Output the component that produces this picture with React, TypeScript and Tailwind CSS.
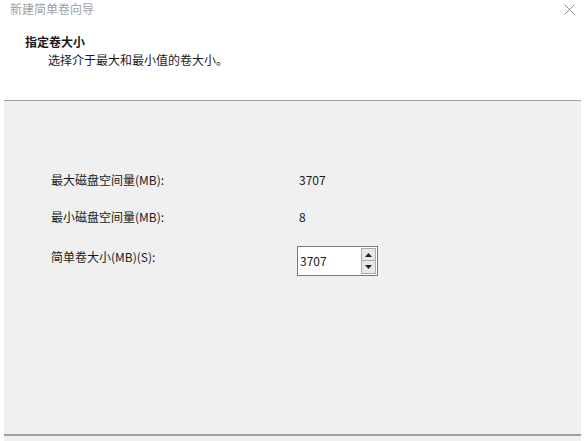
import React from 'react';

const rows = [
  { label: '最大磁盘空间量(MB):', value: '3707' },
  { label: '最小磁盘空间量(MB):', value: '8' },
];

export default function App() {
  return (
    <div
      className="w-[584px] h-[441px] bg-white flex flex-col text-[12px] text-[#1a1a1a] overflow-hidden"
      style={{ fontFamily: '"Microsoft YaHei", "Noto Sans CJK SC", sans-serif' }}
    >
      {/* title bar */}
      <div className="h-[18px] flex items-center justify-between pl-[10px] pr-[9px]">
        <span className="text-[12px] text-[#a0a0a0]">新建简单卷向导</span>
        <svg width="11" height="11" viewBox="0 0 11 11">
          <path d="M0.5 0.5L10.5 10.5M10.5 0.5L0.5 10.5" stroke="#8c8c8c" strokeWidth="1" />
        </svg>
      </div>

      {/* header */}
      <div className="h-[82px] pl-[25px] pt-[16px] flex flex-col">
        <span className="font-bold leading-[16px]">指定卷大小</span>
        <span className="pl-[23px] leading-[18px] mt-[1px]">选择介于最大和最小值的卷大小。</span>
      </div>

      {/* body */}
      <div className="ml-[4px] mr-[3px] flex-1 flex flex-col border-t border-[#a0a0a0] bg-[#f0f0f0]">
        <div className="flex-1 flex flex-col pt-[70px] pl-[47px]">
          {rows.map((r) => (
            <div key={r.label} className="flex items-center h-[18px] mb-[19px]">
              <span className="w-[248px]">{r.label}</span>
              <span>{r.value}</span>
            </div>
          ))}
          <div className="flex items-start mt-[1px]">
            <span className="w-[246px] leading-[18px] pt-[2px]">简单卷大小(MB)(S):</span>
            <div className="flex h-[30px] bg-white border border-[#7a7a7a]">
              <div className="w-[63px] pl-[2px] flex items-center text-[12px]">3707</div>
              <div className="flex flex-col justify-center pr-[1px]">
                <div className="w-[15px] h-[13px] bg-[#e8e8e8] border border-[#adadad] flex items-center justify-center">
                  <svg width="7" height="4" viewBox="0 0 7 4"><path d="M3.5 0L7 4H0Z" fill="#222" /></svg>
                </div>
                <div className="w-[15px] h-[13px] bg-[#e8e8e8] border border-[#adadad] border-t-0 flex items-center justify-center">
                  <svg width="7" height="4" viewBox="0 0 7 4"><path d="M0 0H7L3.5 4Z" fill="#222" /></svg>
                </div>
              </div>
            </div>
          </div>
        </div>
        <div className="h-[7px] border-t-2 border-[#a0a0a0] bg-[#f0f0f0]" />
      </div>
    </div>
  );
}
